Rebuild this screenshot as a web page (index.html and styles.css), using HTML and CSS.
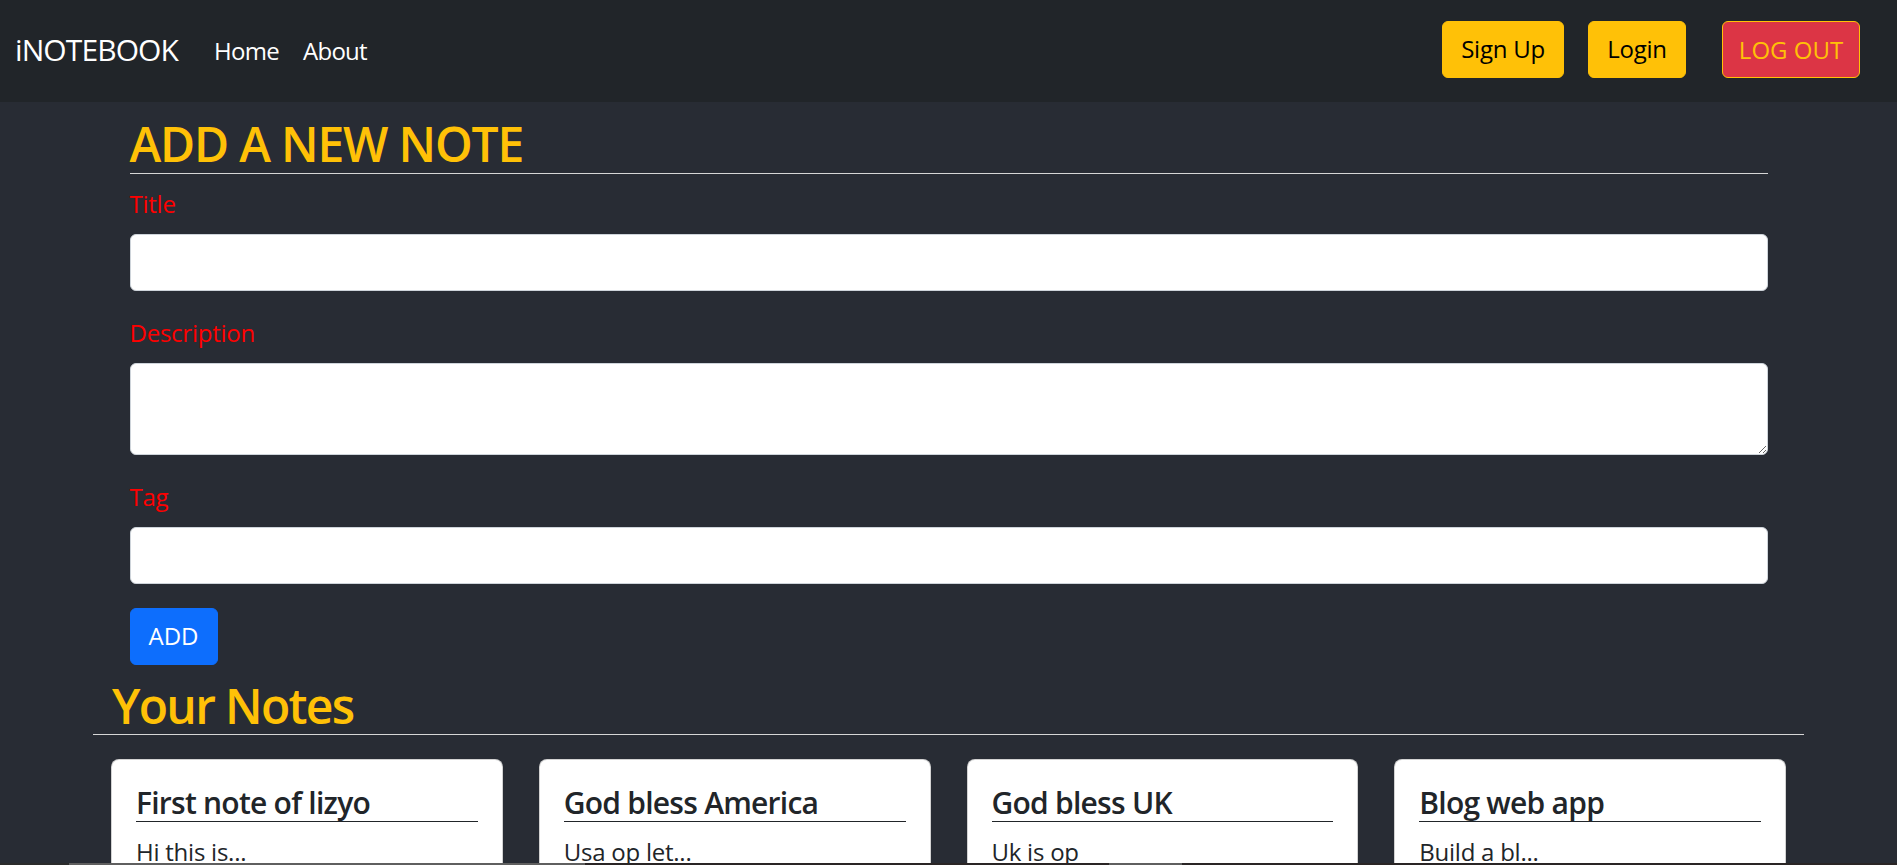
FILE: index.html
```html
<!DOCTYPE html>
<html lang="en">
<head>
<meta charset="utf-8">
<title>iNotebook</title>
<link rel="stylesheet" href="styles.css">
</head>
<body>
<nav class="navbar">
  <a class="brand" href="#">iNOTEBOOK</a>
  <ul class="nav-links">
    <li><a href="#">Home</a></li>
    <li><a href="#">About</a></li>
  </ul>
  <div class="nav-actions">
    <a class="btn btn-warning btn-signup" href="#">Sign Up</a>
    <a class="btn btn-warning btn-login" href="#">Login</a>
    <button class="btn btn-logout">LOG OUT</button>
  </div>
</nav>

<main class="form-wrap">
  <h2 class="section-title">ADD A NEW NOTE</h2>
  <form class="note-form">
    <div class="field">
      <label for="title">Title</label>
      <input id="title" type="text" class="control">
    </div>
    <div class="field">
      <label for="description">Description</label>
      <textarea id="description" class="control control-area"></textarea>
    </div>
    <div class="field">
      <label for="tag">Tag</label>
      <input id="tag" type="text" class="control">
    </div>
    <button type="button" class="btn btn-primary">ADD</button>
  </form>
</main>

<section class="notes-wrap">
  <h2 class="notes-title">Your Notes</h2>
  <div class="notes-grid">
    <div class="note-col"><div class="card"><div class="card-body"><h5 class="card-title">First note of lizyo</h5><p class="card-text">Hi this is...</p></div></div></div>
    <div class="note-col"><div class="card"><div class="card-body"><h5 class="card-title">God bless America</h5><p class="card-text">Usa op let...</p></div></div></div>
    <div class="note-col"><div class="card"><div class="card-body"><h5 class="card-title">God bless UK</h5><p class="card-text">Uk is op</p></div></div></div>
    <div class="note-col"><div class="card"><div class="card-body"><h5 class="card-title">Blog web app</h5><p class="card-text">Build a bl...</p></div></div></div>
  </div>
</section>

<div class="bottom-strip"></div>
</body>
</html>
```
FILE: styles.css
```css
* { box-sizing: border-box; }
html, body { overflow: hidden; }
body {
  margin: 0;
  background: #282c34;
  font-family: "Open Sans", "Noto Sans", sans-serif;
  font-size: 24px;
  line-height: 1.5;
  color: #212529;
  letter-spacing: -0.01em;
  height: 865px;
}
a { text-decoration: none; }

/* navbar */
.navbar {
  height: 102px;
  background: #212529;
  display: flex;
  align-items: center;
  padding: 0 37px 0 15px;
}
.brand {
  color: #fff;
  font-size: 30px;
  line-height: 45px;
  margin-right: 24px;
  margin-bottom: 3px;
  letter-spacing: -0.03em;
}
.nav-links {
  list-style: none;
  margin: 0;
  padding: 0;
  display: flex;
  flex: 1;
}
.nav-links a {
  display: block;
  color: #fff;
  padding: 0 12px;
  line-height: 36px;
  letter-spacing: -0.03em;
}
.nav-actions {
  display: flex;
  align-items: center;
  margin-bottom: 3px;
}
.btn {
  display: inline-block;
  height: 57px;
  font-family: inherit;
  font-size: 24px;
  line-height: 36px;
  padding: 9px 18px;
  border: 1.5px solid transparent;
  border-radius: 6px;
  text-align: center;
  cursor: pointer;
}
.btn-warning {
  background: #ffc107;
  border-color: #ffc107;
  color: #000;
}
.btn-signup { width: 122px; padding: 9px 0; margin-right: 24px; }
.btn-login { width: 98px; padding: 9px 0; margin-right: 36px; }
.btn-logout {
  width: 138px;
  padding: 9px 0;
  background: #dc3545;
  border-color: #ffc107;
  color: #ffc107;
}

/* form */
.form-wrap {
  width: 1638px;
  margin: 0 auto;
}
.section-title {
  margin: 13px 0 12px;
  font-size: 48px;
  font-weight: 600;
  line-height: 1.2;
  color: #ffc107;
  border-bottom: 1px solid #d6d6d6;
  letter-spacing: -0.025em;
}
.field { margin-bottom: 24px; }
.field label {
  display: block;
  color: #ff0000;
  font-size: 24px;
  line-height: 36px;
  margin-bottom: 12px;
}
.control {
  display: block;
  width: 100%;
  height: 57px;
  padding: 9px 18px;
  font-family: inherit;
  font-size: 24px;
  line-height: 36px;
  background: #fff;
  border: 1.5px solid #ced4da;
  border-radius: 6px;
}
.control-area {
  height: 92px;
  resize: vertical;
}
.btn-primary {
  width: 88px;
  padding: 9px 0;
  background: #0d6efd;
  border-color: #0d6efd;
  color: #fff;
}

/* notes */
.notes-wrap {
  width: 1711px;
  margin: 0 auto;
}
.notes-title {
  margin: 12px 0 0;
  padding: 0 19px;
  font-size: 48px;
  font-weight: 600;
  line-height: 1.2;
  color: #ffc107;
  border-bottom: 1px solid #d6d6d6;
  letter-spacing: -0.035em;
}
.notes-grid {
  display: grid;
  grid-template-columns: repeat(4, 1fr);
  margin-top: 24px;
}
.note-col { padding: 0 18px; }
.card {
  background: #fff;
  border: 1.5px solid rgba(0,0,0,.175);
  border-radius: 8px;
}
.card-body { padding: 24px; }
.card-title {
  margin: 0 0 12px;
  padding-top: 1px;
  font-size: 30px;
  font-weight: 600;
  line-height: 1.2;
  color: #212529;
  border-bottom: 1px solid #212529;
  letter-spacing: -0.025em;
}
.card-text {
  margin: 0 0 24px;
  font-size: 24px;
  line-height: 36px;
}

.bottom-strip {
  position: fixed;
  left: 0;
  right: 0;
  bottom: 0;
  height: 2px;
  background: linear-gradient(90deg, #2b2b2b 0 69px, #5f5f5f 69px 585px, #2a2525 585px 1109px, #5f5f5f 1109px 1182px, #2a2525 1182px);
}
```
